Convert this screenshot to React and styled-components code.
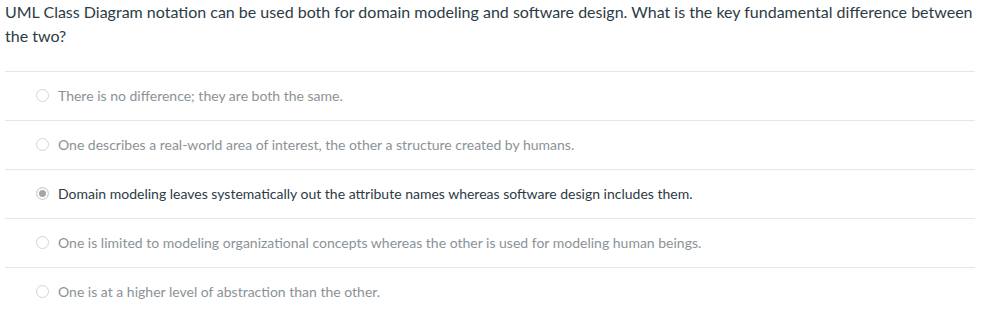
import React from "react";
import styled, { createGlobalStyle } from "styled-components";

const GlobalStyle = createGlobalStyle`
  body {
    margin: 0;
    background: #fff;
    font-family: Lato, "Open Sans", sans-serif;
  }
`;

const answers = [
  { text: "There is no difference; they are both the same." },
  { text: "One describes a real-world area of interest, the other a structure created by humans." },
  { text: "Domain modeling leaves systematically out the attribute names whereas software design includes them.", selected: true },
  { text: "One is limited to modeling organizational concepts whereas the other is used for modeling human beings." },
  { text: "One is at a higher level of abstraction than the other." },
];

const Question = () => (
  <Wrapper>
    <GlobalStyle />
    <QuestionText>
      UML Class Diagram notation can be used both for domain modeling and software design. What is the key fundamental difference between the two?
    </QuestionText>
    <AnswerList>
      {answers.map((a, i) => (
        <Answer key={i}>
          <Radio selected={a.selected} />
          <AnswerLabel selected={a.selected}>{a.text}</AnswerLabel>
        </Answer>
      ))}
    </AnswerList>
  </Wrapper>
);

const Wrapper = styled.div`
  padding: 0 7px 0 5px;
`;

const QuestionText = styled.div`
  font-size: 16px;
  line-height: 24px;
  color: #2d3b45;
  margin-bottom: 23px;
`;

const AnswerList = styled.div`
  display: flex;
  flex-direction: column;
`;

const Answer = styled.div`
  box-sizing: border-box;
  display: flex;
  align-items: center;
  height: 49px;
  padding: 0 0 2px 31px;
  border-top: 1px solid #e6e6e6;
`;

const Radio = styled.span`
  box-sizing: border-box;
  width: 13px;
  height: 13px;
  border-radius: 50%;
  border: 1.5px solid #d2d4d6;
  background: ${({ selected }) => (selected ? "#a3a6a9" : "#fff")};
  margin-right: 9px;
  flex-shrink: 0;
  box-shadow: ${({ selected }) => (selected ? "inset 0 0 0 2px #fff" : "none")};
`;

const AnswerLabel = styled.span`
  font-size: 14px;
  color: ${({ selected }) => (selected ? "#2d3b45" : "#8b9297")};
`;

export default Question;
